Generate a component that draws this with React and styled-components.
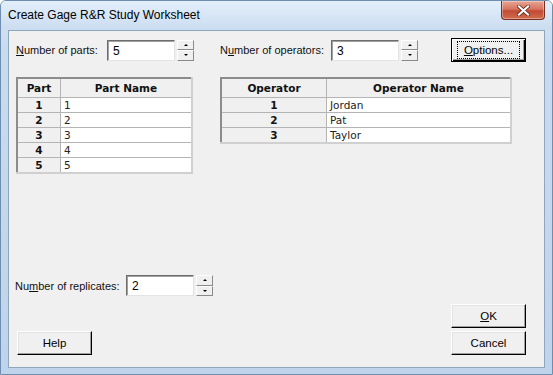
import React from "react";
import styled, { createGlobalStyle } from "styled-components";

const Global = createGlobalStyle`
  html, body {
    margin: 0;
    padding: 0;
    background: #ffffff;
  }
  body {
    font-family: "Liberation Sans", Arial, sans-serif;
    font-size: 12px;
    color: #000;
  }
`;

const Window = styled.div`
  width: 553px;
  height: 375px;
  box-sizing: border-box;
  display: flex;
  flex-direction: column;
  border: 1px solid #6f8dae;
  border-radius: 6px 6px 0 0;
  background: linear-gradient(180deg, #dde9f6 0%, #c9dbef 12%, #bfd3ea 100%);
  overflow: hidden;
`;

const TitleBar = styled.div`
  height: 29px;
  display: flex;
  align-items: flex-start;
  justify-content: space-between;
  padding-left: 7px;
  padding-right: 7px;
  background: linear-gradient(180deg, #e3eefa 0%, #d7e6f6 50%, #cbdcf0 100%);
`;

const Title = styled.span`
  margin-top: 7px;
  font-family: "Liberation Sans", Arial, sans-serif;
  font-size: 12px;
  color: #000;
`;

const CloseButton = styled.div`
  width: 44px;
  height: 19px;
  box-sizing: border-box;
  border: 1px solid #7b2f22;
  border-top: none;
  border-radius: 0 0 4px 4px;
  background: linear-gradient(180deg, #e8a594 0%, #d7745f 45%, #c24a32 55%, #cf6d50 100%);
  display: flex;
  align-items: center;
  justify-content: center;
  box-shadow: inset 0 0 0 1px rgba(255, 255, 255, 0.35);
`;

const Client = styled.div`
  flex: 1;
  margin: 0 7px 6px 7px;
  border: 1px solid #8fa6bf;
  background: #f0f0f0;
  display: flex;
  flex-direction: column;
  padding: 7px 18px 12px 6px;
`;

const TopRow = styled.div`
  display: flex;
  align-items: center;
  height: 24px;
`;

const Field = styled.div`
  display: flex;
  align-items: center;
  width: ${(p) => p.$width}px;
  padding-left: ${(p) => p.$indent || 0}px;
  box-sizing: border-box;
  flex-shrink: 0;
`;

const Label = styled.span`
  font-size: 11px;
  white-space: nowrap;
  width: ${(p) => p.$width}px;
  flex-shrink: 0;
  color: #111;
`;

const TextBox = styled.div`
  width: ${(p) => p.$width}px;
  height: 21px;
  box-sizing: border-box;
  flex-shrink: 0;
  background: #fff;
  border: 1px solid;
  border-color: #6d6d6d #e3e3e3 #e3e3e3 #6d6d6d;
  box-shadow: inset 1px 1px 0 #a0a0a0;
  padding: 3px 0 0 5px;
  font-size: 12px;
`;

const Spinner = styled.div`
  margin-left: 2px;
  width: 17px;
  height: 21px;
  display: flex;
  flex-direction: column;
  flex-shrink: 0;
`;

const SpinButton = styled.div`
  flex: 1;
  box-sizing: border-box;
  background: #f0f0f0;
  border: 1px solid;
  border-color: #ffffff #8a8a8a #8a8a8a #ffffff;
  display: flex;
  align-items: center;
  justify-content: center;
`;

const Arrow = styled.span`
  width: 0;
  height: 0;
  border-left: 2px solid transparent;
  border-right: 2px solid transparent;
  ${(p) =>
    p.$up ? "border-bottom: 2px solid #000;" : "border-top: 2px solid #000;"}
`;

const Button = styled.div`
  width: ${(p) => p.$width || 75}px;
  height: 24px;
  box-sizing: border-box;
  background: #f0f0f0;
  border: 1px solid;
  border-color: #ffffff #000000 #000000 #ffffff;
  box-shadow: inset -1px -1px 0 #a0a0a0, inset 1px 1px 0 #e3e3e3;
  display: flex;
  align-items: center;
  justify-content: center;
  font-size: 11.5px;
  flex-shrink: 0;
`;

const DefaultButton = styled(Button)`
  border: 1px solid #000;
  box-shadow: inset 1px 1px 0 #ffffff, inset -1px -1px 0 #000, inset -2px -2px 0 #a0a0a0;
`;

const FocusRect = styled.span`
  border: 1px dotted #000;
  padding: 2px 0;
  width: 63px;
  box-sizing: border-box;
  text-align: center;
`;

const TablesRow = styled.div`
  display: flex;
  align-items: flex-start;
  margin-top: 15px;
  padding-left: 1px;
`;

const Grid = styled.table`
  border-collapse: collapse;
  width: ${(p) => p.$width}px;
  margin-left: ${(p) => p.$ml || 0}px;
  border: 2px solid;
  border-color: #8c8c8c #d0d0d0 #d0d0d0 #8c8c8c;
  font-family: "DejaVu Sans", Tahoma, sans-serif;
  font-size: 10.5px;
  table-layout: fixed;
`;

const HeadCell = styled.th`
  height: 18px;
  padding: 0;
  background: #f0f0f0;
  border: 1px solid #b4b4b4;
  font-weight: bold;
  text-align: center;
  color: #111;
  width: ${(p) => (p.$width ? `${p.$width}px` : "auto")};
`;

const NumCell = styled.td`
  height: 14px;
  padding: 0;
  background: #f0f0f0;
  border: 1px solid #b4b4b4;
  font-weight: bold;
  text-align: center;
  line-height: 14px;
  color: #111;
`;

const NameCell = styled.td`
  height: 14px;
  padding: 0 0 0 3px;
  background: #fff;
  border: 1px solid #b4b4b4;
  line-height: 14px;
  color: #222;
`;

const Spacer = styled.div`
  flex: 1;
`;

const ReplicateRow = styled.div`
  display: flex;
  align-items: center;
`;

const ButtonColumn = styled.div`
  display: flex;
  flex-direction: column;
  margin-top: 8px;
  gap: 3px;
`;

const ButtonRow = styled.div`
  display: flex;
  justify-content: ${(p) => p.$justify || "space-between"};
  padding-left: 2px;
`;

const parts = ["1", "2", "3", "4", "5"];
const operators = ["Jordan", "Pat", "Taylor"];

function Spin() {
  return (
    <Spinner>
      <SpinButton>
        <Arrow $up />
      </SpinButton>
      <SpinButton>
        <Arrow />
      </SpinButton>
    </Spinner>
  );
}

export default function App() {
  return (
    <>
      <Global />
      <Window>
        <TitleBar>
          <Title>Create Gage R&amp;R Study Worksheet</Title>
          <CloseButton>
            <svg width="13" height="11" viewBox="0 0 13 11">
              <path
                d="M2 1.5 L11 9.5 M11 1.5 L2 9.5"
                stroke="#5a1d12"
                strokeWidth="3.6"
                strokeLinecap="square"
              />
              <path
                d="M2 1.5 L11 9.5 M11 1.5 L2 9.5"
                stroke="#ffffff"
                strokeWidth="2.2"
                strokeLinecap="square"
              />
            </svg>
          </CloseButton>
        </TitleBar>
        <Client>
          <TopRow>
            <Field $width={205} $indent={1}>
              <Label $width={91}>
                <u>N</u>umber of parts:
              </Label>
              <TextBox $width={68}>5</TextBox>
              <Spin />
            </Field>
            <Field $width={231}>
              <Label $width={111}>
                N<u>u</u>mber of operators:
              </Label>
              <TextBox $width={68}>3</TextBox>
              <Spin />
            </Field>
            <DefaultButton $width={75}>
              <FocusRect>
                <u>O</u>ptions...
              </FocusRect>
            </DefaultButton>
          </TopRow>

          <TablesRow>
            <Grid $width={177}>
              <thead>
                <tr>
                  <HeadCell $width={42}>Part</HeadCell>
                  <HeadCell>Part Name</HeadCell>
                </tr>
              </thead>
              <tbody>
                {parts.map((p) => (
                  <tr key={p}>
                    <NumCell>{p}</NumCell>
                    <NameCell>{p}</NameCell>
                  </tr>
                ))}
              </tbody>
            </Grid>
            <Grid $width={292} $ml={27}>
              <thead>
                <tr>
                  <HeadCell $width={104}>Operator</HeadCell>
                  <HeadCell>Operator Name</HeadCell>
                </tr>
              </thead>
              <tbody>
                {operators.map((o, i) => (
                  <tr key={o}>
                    <NumCell>{i + 1}</NumCell>
                    <NameCell>{o}</NameCell>
                  </tr>
                ))}
              </tbody>
            </Grid>
          </TablesRow>

          <Spacer />

          <ReplicateRow>
            <Label $width={111}>
              Nu<u>m</u>ber of replicates:
            </Label>
            <TextBox $width={68}>2</TextBox>
            <Spin />
          </ReplicateRow>

          <ButtonColumn>
            <ButtonRow $justify="flex-end">
              <Button $width={75}>
                <span>
                  <u>O</u>K
                </span>
              </Button>
            </ButtonRow>
            <ButtonRow>
              <Button $width={75}>Help</Button>
              <Button $width={75}>Cancel</Button>
            </ButtonRow>
          </ButtonColumn>
        </Client>
      </Window>
    </>
  );
}
